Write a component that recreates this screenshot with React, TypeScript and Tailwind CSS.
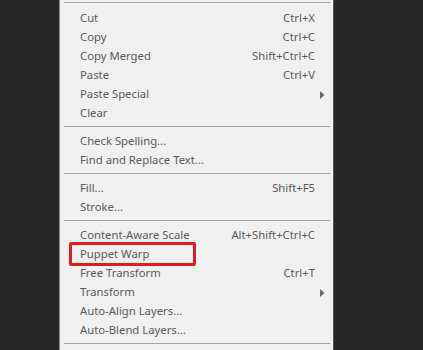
import React from "react";

type Item = { label: string; shortcut?: string; sub?: boolean; boxed?: boolean };

const sections: Item[][] = [
  [
    { label: "Cut", shortcut: "Ctrl+X" },
    { label: "Copy", shortcut: "Ctrl+C" },
    { label: "Copy Merged", shortcut: "Shift+Ctrl+C" },
    { label: "Paste", shortcut: "Ctrl+V" },
    { label: "Paste Special", sub: true },
    { label: "Clear" },
  ],
  [{ label: "Check Spelling..." }, { label: "Find and Replace Text..." }],
  [{ label: "Fill...", shortcut: "Shift+F5" }, { label: "Stroke..." }],
  [
    { label: "Content-Aware Scale", shortcut: "Alt+Shift+Ctrl+C" },
    { label: "Puppet Warp", boxed: true },
    { label: "Free Transform", shortcut: "Ctrl+T" },
    { label: "Transform", sub: true },
    { label: "Auto-Align Layers..." },
    { label: "Auto-Blend Layers..." },
  ],
];

function Sep() {
  return <div className="ml-[4px] mr-[3px] h-px bg-[#a3a3a3]" />;
}

function Row({ item }: { item: Item }) {
  return (
    <div className="relative flex h-[19px] items-center pl-[20px]">
      <span className="flex-1">{item.label}</span>
      {item.shortcut && <span>{item.shortcut}</span>}
      <span className="flex w-[18px] items-center pl-[5px]">
        {item.sub && (
          <svg width="5" height="8" viewBox="0 0 5 8">
            <path d="M0 0 L4.5 4 L0 8 Z" fill="#6b6b6b" />
          </svg>
        )}
      </span>
      {item.boxed && (
        <div className="absolute left-[9px] top-[-3px] h-[24px] w-[127px] rounded-[2px] border-[3px] border-[#e21b1b]" />
      )}
    </div>
  );
}

export default function App() {
  return (
    <div className="flex h-[350px] w-[423px] overflow-hidden bg-[#262626]">
      <div
        className="ml-[59px] h-[350px] w-[275px] border-l border-r border-l-[#8a8a8a] border-r-[#5a5a5a] bg-[#f0f0f0] pt-[2px] text-[11.3px] text-[#5a5a5a]"
        style={{ fontFamily: '"Segoe UI", "Noto Sans", sans-serif' }}
      >
        {sections.map((sec, i) => (
          <div key={i}>
            <Sep />
            <div className={i === 0 ? "pt-[6px] pb-[3px]" : "pt-[5px] pb-[3px]"}>
              {sec.map((it) => (
                <Row key={it.label} item={it} />
              ))}
            </div>
          </div>
        ))}
        <Sep />
      </div>
    </div>
  );
}
